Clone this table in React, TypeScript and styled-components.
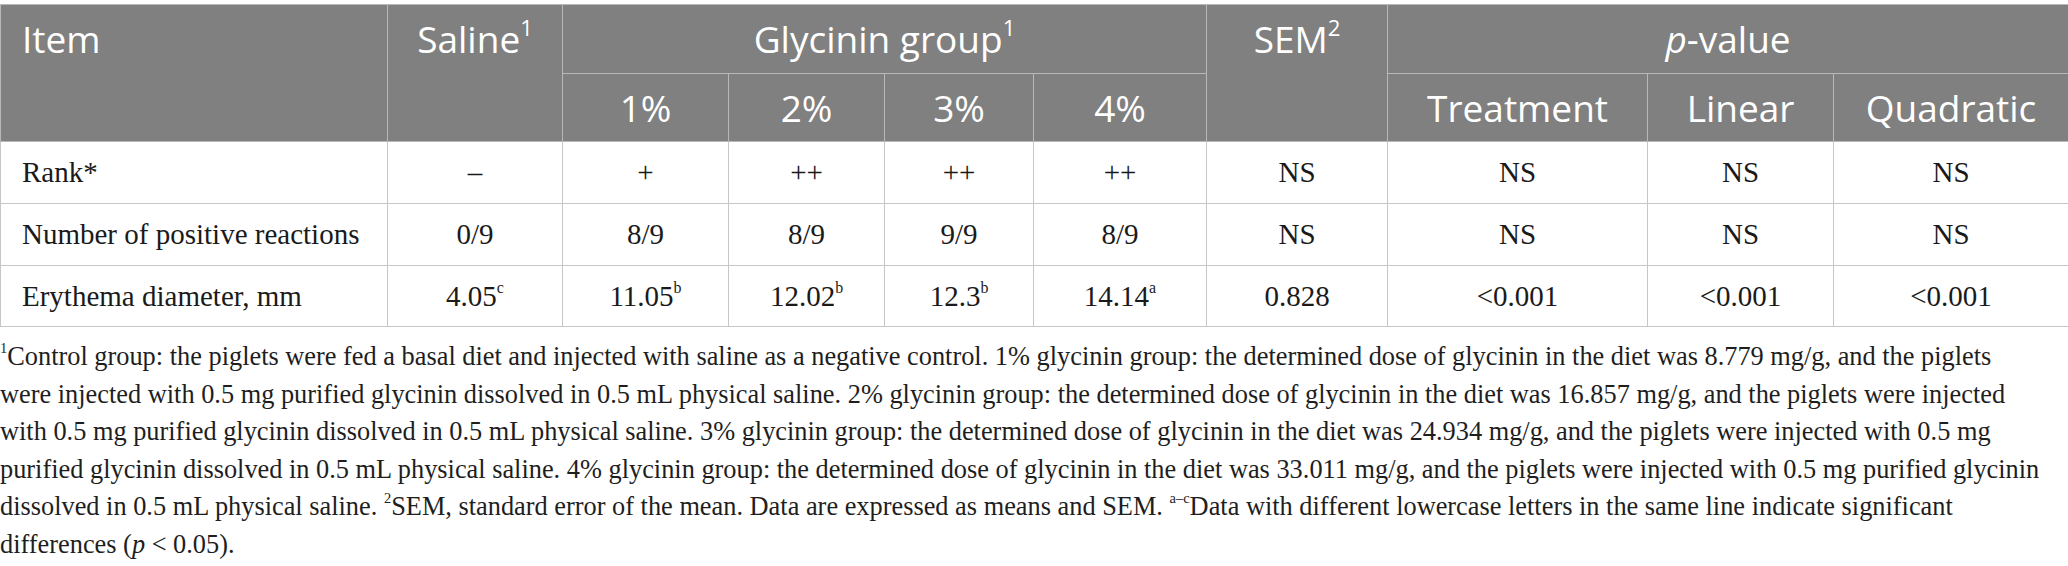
import React from "react";
import styled, { createGlobalStyle } from "styled-components";

const GlobalStyle = createGlobalStyle`
  html, body {
    margin: 0;
    padding: 0;
    background: #ffffff;
  }
`;

const Page = styled.div`
  width: 2068px;
  padding-top: 4px;
  box-sizing: border-box;
`;

const Table = styled.table`
  width: 2068px;
  border-collapse: collapse;
  table-layout: fixed;
`;

const HeadRow = styled.tr<{ $h: number }>`
  height: ${(p) => p.$h}px;
`;

const BodyRow = styled.tr<{ $h: number }>`
  height: ${(p) => p.$h}px;
`;

const HeadCell = styled.th<{ $left?: boolean }>`
  background: #7f807f;
  color: #ffffff;
  font-family: "Open Sans", "Noto Sans", sans-serif;
  font-weight: 400;
  font-size: 37px;
  line-height: 44px;
  text-align: ${(p) => (p.$left ? "left" : "center")};
  vertical-align: top;
  padding: 12px ${(p) => (p.$left ? "0 0 21px" : "0 0 0")};
  border: 1px solid #b8b8b8;
  white-space: nowrap;
`;

const BodyCell = styled.td<{ $left?: boolean }>`
  font-family: "Liberation Serif", "Times New Roman", serif;
  font-size: 29px;
  color: #1a1a1a;
  text-align: ${(p) => (p.$left ? "left" : "center")};
  vertical-align: middle;
  padding: 0 ${(p) => (p.$left ? "0 0 21px" : "0 0 0")};
  border: 1px solid #c6c6c6;
  white-space: nowrap;
`;

const HeadSup = styled.sup`
  font-size: 0.6em;
  line-height: 0;
  vertical-align: 0.75em;
`;

const Sup = styled.sup`
  font-size: 0.55em;
  line-height: 0;
  vertical-align: 0.8em;
`;

const Ital = styled.i`
  font-style: italic;
`;

const Notes = styled.div`
  margin-top: 11px;
  font-family: "Liberation Serif", "Times New Roman", serif;
  font-size: 26.35px;
  line-height: 37.6px;
  color: #1e1e1e;
  white-space: nowrap;
`;

const NoteLine = styled.div``;

const cols = [387, 175, 166, 156, 149, 173, 181, 260, 186, 235];

type Row = { label: string; h: number; cells: [string, string?][] };

const rows: Row[] = [
  {
    label: "Rank*",
    h: 62,
    cells: [["\u2013"], ["+"], ["++"], ["++"], ["++"], ["NS"], ["NS"], ["NS"], ["NS"]],
  },
  {
    label: "Number of positive reactions",
    h: 62,
    cells: [["0/9"], ["8/9"], ["8/9"], ["9/9"], ["8/9"], ["NS"], ["NS"], ["NS"], ["NS"]],
  },
  {
    label: "Erythema diameter, mm",
    h: 61,
    cells: [
      ["4.05", "c"],
      ["11.05", "b"],
      ["12.02", "b"],
      ["12.3", "b"],
      ["14.14", "a"],
      ["0.828"],
      ["<0.001"],
      ["<0.001"],
      ["<0.001"],
    ],
  },
];

export default function App() {
  return (
    <>
      <GlobalStyle />
      <Page>
        <Table>
          <colgroup>
            {cols.map((w, i) => (
              <col key={i} style={{ width: w }} />
            ))}
          </colgroup>
          <thead>
            <HeadRow $h={69}>
              <HeadCell $left rowSpan={2}>Item</HeadCell>
              <HeadCell rowSpan={2}>
                Saline<HeadSup>1</HeadSup>
              </HeadCell>
              <HeadCell colSpan={4}>
                Glycinin group<HeadSup>1</HeadSup>
              </HeadCell>
              <HeadCell rowSpan={2}>
                SEM<HeadSup>2</HeadSup>
              </HeadCell>
              <HeadCell colSpan={3}>
                <Ital>p</Ital>-value
              </HeadCell>
            </HeadRow>
            <HeadRow $h={68}>
              <HeadCell>1%</HeadCell>
              <HeadCell>2%</HeadCell>
              <HeadCell>3%</HeadCell>
              <HeadCell>4%</HeadCell>
              <HeadCell>Treatment</HeadCell>
              <HeadCell>Linear</HeadCell>
              <HeadCell>Quadratic</HeadCell>
            </HeadRow>
          </thead>
          <tbody>
            {rows.map((r) => (
              <BodyRow key={r.label} $h={r.h}>
                <BodyCell $left>{r.label}</BodyCell>
                {r.cells.map(([v, s], i) => (
                  <BodyCell key={i}>
                    {v}
                    {s && <Sup>{s}</Sup>}
                  </BodyCell>
                ))}
              </BodyRow>
            ))}
          </tbody>
        </Table>
        <Notes>
          <NoteLine>
            <Sup>1</Sup>Control group: the piglets were fed a basal diet and injected with saline as a negative control. 1% glycinin group: the determined dose of glycinin in the diet was 8.779 mg/g, and the piglets
          </NoteLine>
          <NoteLine>
            were injected with 0.5 mg purified glycinin dissolved in 0.5 mL physical saline. 2% glycinin group: the determined dose of glycinin in the diet was 16.857 mg/g, and the piglets were injected
          </NoteLine>
          <NoteLine>
            with 0.5 mg purified glycinin dissolved in 0.5 mL physical saline. 3% glycinin group: the determined dose of glycinin in the diet was 24.934 mg/g, and the piglets were injected with 0.5 mg
          </NoteLine>
          <NoteLine>
            purified glycinin dissolved in 0.5 mL physical saline. 4% glycinin group: the determined dose of glycinin in the diet was 33.011 mg/g, and the piglets were injected with 0.5 mg purified glycinin
          </NoteLine>
          <NoteLine>
            dissolved in 0.5 mL physical saline. <Sup>2</Sup>SEM, standard error of the mean. Data are expressed as means and SEM. <Sup>a–c</Sup>Data with different lowercase letters in the same line indicate significant
          </NoteLine>
          <NoteLine>
            differences (<Ital>p</Ital> &lt; 0.05).
          </NoteLine>
        </Notes>
      </Page>
    </>
  );
}
